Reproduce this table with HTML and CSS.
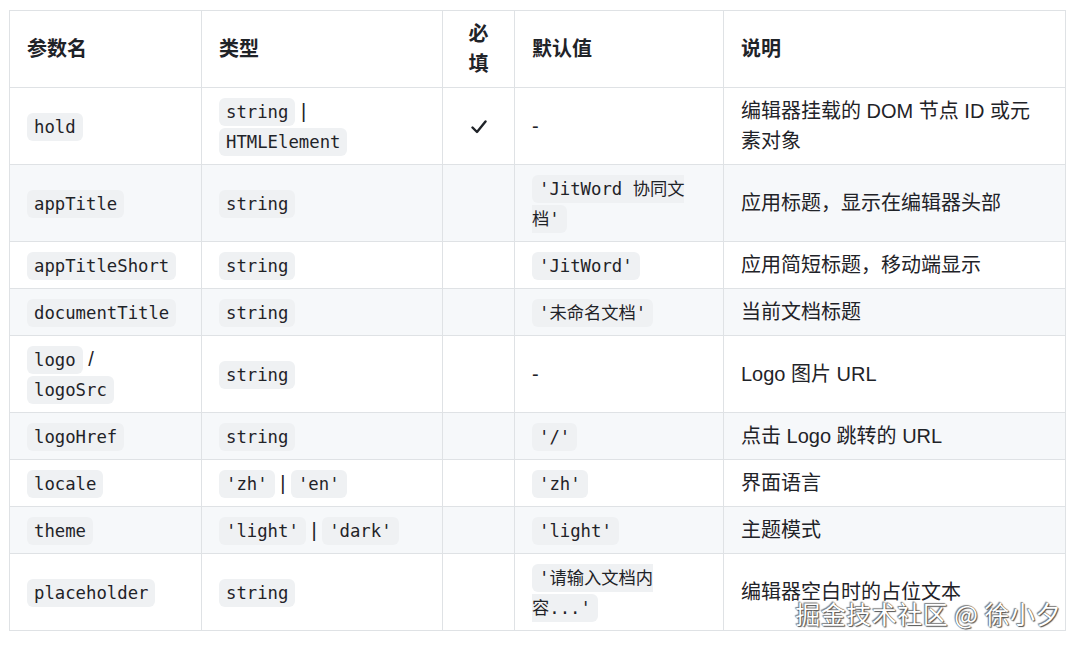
FILE: index.html
```html
<!DOCTYPE html>
<html lang="zh-CN">
<head>
<meta charset="utf-8">
<title>参数表</title>
<link rel="stylesheet" href="styles.css">
</head>
<body>
<div class="page">
  <table class="params">
    <colgroup>
      <col class="c-name">
      <col class="c-type">
      <col class="c-req">
      <col class="c-def">
      <col class="c-desc">
    </colgroup>
    <thead>
      <tr>
        <th>参数名</th>
        <th>类型</th>
        <th class="center">必填</th>
        <th>默认值</th>
        <th>说明</th>
      </tr>
    </thead>
    <tbody>
      <tr>
        <td><code>hold</code></td>
        <td><code>string</code> | <code>HTMLElement</code></td>
        <td class="center"><svg class="check" width="16" height="14" viewBox="0 0 16 14" aria-label="✓"><polyline points="1.5,7.5 6,12 14.5,1.5" fill="none" stroke="#1f2328" stroke-width="2.4" stroke-linecap="round" stroke-linejoin="round"/></svg></td>
        <td>-</td>
        <td>编辑器挂载的 DOM 节点 ID 或元素对象</td>
      </tr>
      <tr>
        <td><code>appTitle</code></td>
        <td><code>string</code></td>
        <td class="center"></td>
        <td><code>'JitWord 协同文档'</code></td>
        <td>应用标题，显示在编辑器头部</td>
      </tr>
      <tr>
        <td><code>appTitleShort</code></td>
        <td><code>string</code></td>
        <td class="center"></td>
        <td><code>'JitWord'</code></td>
        <td>应用简短标题，移动端显示</td>
      </tr>
      <tr>
        <td><code>documentTitle</code></td>
        <td><code>string</code></td>
        <td class="center"></td>
        <td><code>'未命名文档'</code></td>
        <td>当前文档标题</td>
      </tr>
      <tr>
        <td><code>logo</code> / <code>logoSrc</code></td>
        <td><code>string</code></td>
        <td class="center"></td>
        <td>-</td>
        <td>Logo 图片 URL</td>
      </tr>
      <tr>
        <td><code>logoHref</code></td>
        <td><code>string</code></td>
        <td class="center"></td>
        <td><code>'/'</code></td>
        <td>点击 Logo 跳转的 URL</td>
      </tr>
      <tr>
        <td><code>locale</code></td>
        <td><code>'zh'</code> | <code>'en'</code></td>
        <td class="center"></td>
        <td><code>'zh'</code></td>
        <td>界面语言</td>
      </tr>
      <tr>
        <td><code>theme</code></td>
        <td><code>'light'</code> | <code>'dark'</code></td>
        <td class="center"></td>
        <td><code>'light'</code></td>
        <td>主题模式</td>
      </tr>
      <tr>
        <td><code>placeholder</code></td>
        <td><code>string</code></td>
        <td class="center"></td>
        <td><code>'请输入文档内容...'</code></td>
        <td>编辑器空白时的占位文本</td>
      </tr>
    </tbody>
  </table>
  <div class="watermark">掘金技术社区 @ 徐小夕</div>
</div>
</body>
</html>
```

FILE: styles.css
```css
html, body {
  margin: 0;
  padding: 0;
  background: #ffffff;
}

body {
  font-family: "Liberation Sans", "Noto Sans CJK SC", sans-serif;
  font-size: 20px;
  line-height: 30px;
  color: #1f2328;
}

.page {
  position: relative;
  width: 1080px;
  height: 646px;
  padding: 10px 0 0 9px;
  box-sizing: border-box;
}

.params {
  border-collapse: collapse;
  table-layout: fixed;
  width: 1056px;
}

.c-name { width: 192px; }
.c-type { width: 241px; }
.c-req  { width: 72px; }
.c-def  { width: 209px; }
.c-desc { width: 342px; }

.params th,
.params td {
  border: 1px solid #dfe2e5;
  padding: 8px 17px;
  text-align: left;
  vertical-align: middle;
}

.params th {
  font-weight: 700;
}

.params .center {
  text-align: center;
}

.params tbody tr:nth-child(2n) {
  background: #f6f8fa;
}

.check {
  display: inline-block;
  vertical-align: -1px;
}

code {
  font-family: "DejaVu Sans Mono", "Noto Sans CJK SC", monospace;
  font-size: 17.3px;
  line-height: 1;
  padding: 4px 7px;
  border-radius: 6px;
  background: #eff1f3;
  color: #1f2328;
}

.watermark {
  position: absolute;
  right: 19px;
  bottom: 18px;
  font-family: "Noto Sans CJK SC", sans-serif;
  font-size: 25px;
  line-height: 30px;
  color: #ffffff;
  text-shadow: 0 0 1px #3a3a3a, 1px 1px 1px #555555, -1px -1px 1px #888888;
  letter-spacing: 0.5px;
}
```
